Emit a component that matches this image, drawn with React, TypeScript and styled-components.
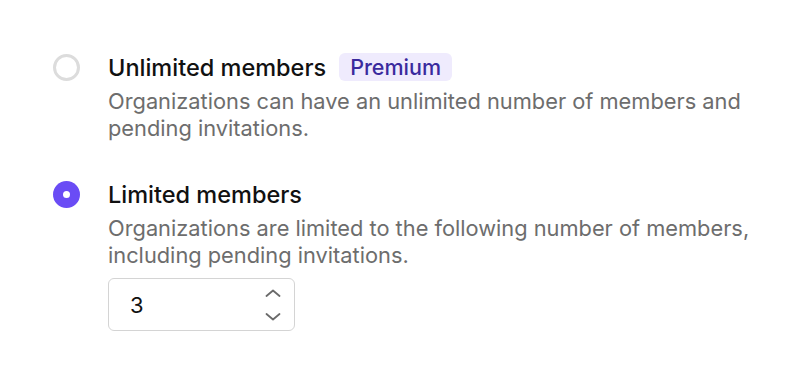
import styled, { createGlobalStyle } from 'styled-components';

const Global = createGlobalStyle`
  body {
    margin: 0;
    background: #ffffff;
    font-family: Inter, "Noto Sans", sans-serif;
  }
`;

const Page = styled.div`
  display: flex;
  flex-direction: column;
  gap: 37px;
  padding: 52px 0 0 53px;
`;

const Option = styled.div`
  display: flex;
  gap: 28px;
  align-items: flex-start;
`;

const Radio = styled.span<{ checked?: boolean }>`
  flex: none;
  width: 27px;
  height: 27px;
  margin-top: 2px;
  box-sizing: border-box;
  border-radius: 50%;
  border: ${(p) => (p.checked ? 'none' : '3px solid #dcdcdc')};
  background: ${(p) => (p.checked ? '#6a4cf5' : '#ffffff')};
  display: flex;
  align-items: center;
  justify-content: center;

  &::after {
    content: '';
    display: ${(p) => (p.checked ? 'block' : 'none')};
    width: 7px;
    height: 7px;
    border-radius: 50%;
    background: #ffffff;
  }
`;

const Body = styled.div`
  display: flex;
  flex-direction: column;
`;

const TitleRow = styled.div`
  display: flex;
  align-items: center;
  gap: 13px;
  height: 30px;
`;

const Title = styled.span`
  font-size: 23.5px;
  font-weight: 500;
  color: #111111;
`;

const Badge = styled.span`
  background: #efebfd;
  color: #3a2a9e;
  font-size: 21.5px;
  font-weight: 500;
  padding: 0 11px;
  line-height: 28px;
  border-radius: 6px;
`;

const Desc = styled.p`
  margin: 6px 0 0;
  font-size: 21.8px;
  line-height: 27px;
  color: #6d6d6d;
  width: 680px;
`;

const NumberBox = styled.div`
  margin-top: 9px;
  width: 187px;
  height: 53px;
  box-sizing: border-box;
  border: 1.5px solid #d4d4d4;
  border-radius: 6px;
  display: flex;
  align-items: center;
  padding: 0 13px 0 21px;
`;

const Value = styled.span`
  flex: 1;
  font-size: 22px;
  color: #111111;
`;

const Steppers = styled.div`
  display: flex;
  flex-direction: column;
  gap: 16px;
  color: #6a6a6a;
`;

const Chevron = ({ up }: { up?: boolean }) => (
  <svg width="16" height="8" viewBox="0 0 16 8" fill="none">
    <path
      d={up ? 'M1.5 7 L8 1.5 L14.5 7' : 'M1.5 1 L8 6.5 L14.5 1'}
      stroke="currentColor"
      strokeWidth="1.8"
      strokeLinecap="round"
      strokeLinejoin="round"
    />
  </svg>
);

export default function App() {
  return (
    <>
      <Global />
      <Page>
        <Option>
          <Radio />
          <Body>
            <TitleRow>
              <Title>Unlimited members</Title>
              <Badge>Premium</Badge>
            </TitleRow>
            <Desc>
              Organizations can have an unlimited number of members and pending
              invitations.
            </Desc>
          </Body>
        </Option>
        <Option>
          <Radio checked />
          <Body>
            <TitleRow>
              <Title>Limited members</Title>
            </TitleRow>
            <Desc>
              Organizations are limited to the following number of members,
              including pending invitations.
            </Desc>
            <NumberBox>
              <Value>3</Value>
              <Steppers>
                <Chevron up />
                <Chevron />
              </Steppers>
            </NumberBox>
          </Body>
        </Option>
      </Page>
    </>
  );
}
